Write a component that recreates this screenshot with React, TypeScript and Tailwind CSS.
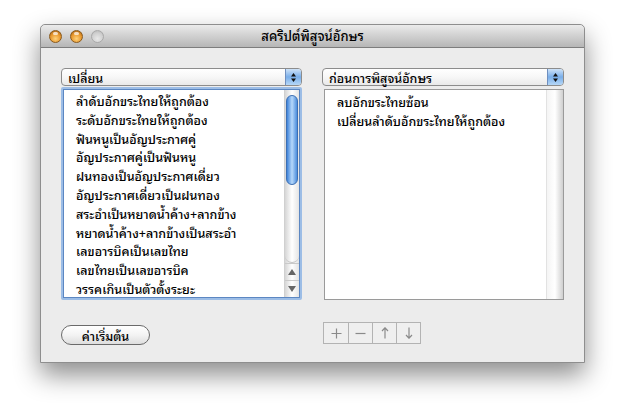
import React from 'react';

const leftItems = [
  'ลำดับอักขระไทยให้ถูกต้อง',
  'ระดับอักขระไทยให้ถูกต้อง',
  'ฟันหนูเป็นอัญประกาศคู่',
  'อัญประกาศคู่เป็นฟันหนู',
  'ฝนทองเป็นอัญประกาศเดี่ยว',
  'อัญประกาศเดี่ยวเป็นฝนทอง',
  'สระอำเป็นหยาดน้ำค้าง+ลากข้าง',
  'หยาดน้ำค้าง+ลากข้างเป็นสระอำ',
  'เลขอารบิคเป็นเลขไทย',
  'เลขไทยเป็นเลขอารบิค',
  'วรรคเกินเป็นตัวตั้งระยะ',
];

const rightItems = ['ลบอักขระไทยซ้อน', 'เปลี่ยนลำดับอักขระไทยให้ถูกต้อง'];

// small up/down arrows used on the popup buttons
const PopupArrows = () => (
  <svg width="7" height="11" viewBox="0 0 7 11">
    <path d="M3.5 1 L6 4.5 L1 4.5 Z" fill="#111" />
    <path d="M3.5 10 L6 6.5 L1 6.5 Z" fill="#111" />
  </svg>
);

const Popup = ({ label }: { label: string }) => (
  <div className="flex h-[18px] rounded-[4px] border border-[#8c8c8c] bg-gradient-to-b from-white via-[#f7f7f7] to-[#e9e9e9]">
    <div className="flex-1 pl-[6px] text-[12.5px] leading-[17px] font-medium text-black whitespace-nowrap">{label}</div>
    <div className="w-[16px] flex items-center justify-center rounded-r-[3px] border-l border-[#6f8fbf] bg-gradient-to-b from-[#cfe3f8] via-[#79aee9] to-[#b5d7f7]">
      <PopupArrows />
    </div>
  </div>
);

const Light = ({ on }: { on: boolean }) =>
  on ? (
    <div className="w-[13px] h-[13px] rounded-full border border-[#8a5a1c] bg-[radial-gradient(circle_at_50%_70%,#ffd27a_0%,#e7962c_55%,#9c5a14_100%)] relative">
      <div className="absolute left-[3px] top-[1px] w-[5px] h-[3px] rounded-full bg-white/70" />
    </div>
  ) : (
    <div className="w-[13px] h-[13px] rounded-full border border-[#a9a9a9] bg-[radial-gradient(circle_at_50%_70%,#e8e8e8_0%,#cfcfcf_60%,#b3b3b3_100%)]" />
  );

export default function App() {
  return (
    <div
      className="w-[623px] h-[409px] bg-white pt-[24px] pl-[40px]"
      style={{ fontFamily: '"Noto Sans Thai Looped", "Noto Sans Thai", "Noto Sans", sans-serif' }}
    >
      <div className="w-[545px] h-[339px] flex flex-col rounded-t-[5px] border border-[#8e8e8e] shadow-[0_12px_26px_rgba(0,0,0,0.45)] bg-[#ececec]">
        {/* title bar */}
        <div className="h-[23px] relative flex items-center rounded-t-[5px] border-b border-[#7d7d7d] bg-gradient-to-b from-[#ebebeb] to-[#b6b6b6]">
          <div className="flex gap-[8px] pl-[8px]">
            <Light on />
            <Light on />
            <Light on={false} />
          </div>
          <div className="absolute inset-0 flex items-center justify-center text-[13px] font-medium text-black">
            สคริปต์พิสูจน์อักษร
          </div>
        </div>

        {/* body */}
        <div className="flex-1 flex flex-col px-[20px] pt-[20px]">
          <div className="flex gap-[20px]">
            {/* left column */}
            <div className="w-[242px] flex flex-col gap-[1px]">
              <Popup label="เปลี่ยน" />
              <div className="h-[213px] p-[2px] rounded-[2px] bg-[#9cbde6]">
                <div className="h-full flex border border-[#5c87c2] bg-white">
                  <div className="flex-1 pt-[1px] pl-[12px]">
                    {leftItems.map((t) => (
                      <div key={t} className="h-[18.8px] leading-[18.8px] text-[12.5px] font-medium text-black whitespace-nowrap">
                        {t}
                      </div>
                    ))}
                  </div>
                  {/* aqua scroller */}
                  <div className="w-[15px] flex flex-col bg-gradient-to-r from-[#d6d6d6] via-white to-[#e4e4e4] border-l border-[#d0d0d0]">
                    <div className="h-[5px]" />
                    <div className="mx-[1px] h-[90px] rounded-full border border-[#3c6fb3] bg-gradient-to-r from-[#3d82d8] via-[#b6d8fa] to-[#4b8ddc]" />
                    <div className="flex-1 rounded-b-full border-b border-[#c4c4c4]" />
                    <div className="h-[17px] flex items-center justify-center border-t border-[#c9c9c9]">
                      <svg width="8" height="6" viewBox="0 0 8 6"><path d="M4 0 L8 6 L0 6 Z" fill="#666" /></svg>
                    </div>
                    <div className="h-[17px] flex items-center justify-center border-t border-[#c9c9c9]">
                      <svg width="8" height="6" viewBox="0 0 8 6"><path d="M0 0 L8 0 L4 6 Z" fill="#666" /></svg>
                    </div>
                  </div>
                </div>
              </div>
            </div>

            {/* right column */}
            <div className="w-[243px] flex flex-col gap-[3px]">
              <Popup label="ก่อนการพิสูจน์อักษร" />
              <div className="ml-[2px] h-[211px] flex border border-[#9a9a9a] bg-white">
                <div className="flex-1 pt-[2px] pl-[12px]">
                  {rightItems.map((t) => (
                    <div key={t} className="h-[18.8px] leading-[18.8px] text-[12.5px] font-medium text-black whitespace-nowrap">
                      {t}
                    </div>
                  ))}
                </div>
                <div className="w-[17px] bg-gradient-to-r from-[#f4f4f4] via-white to-[#cfcfcf] border-l border-[#e2e2e2]" />
              </div>
            </div>
          </div>

          {/* bottom controls */}
          <div className="flex gap-[20px] mt-[22px]">
            <div className="w-[242px]">
              <button className="w-[89px] h-[20px] rounded-full border border-[#6a6a6a] bg-gradient-to-b from-white via-[#f3f3f3] to-[#dedede] text-[12.5px] font-medium leading-[18px] text-black">
                ค่าเริ่มต้น
              </button>
            </div>
            <div className="flex h-[22px] border border-[#b3b3b3] bg-[#efefef]">
              <div className="w-[24px] flex items-center justify-center">
                <svg width="11" height="11" viewBox="0 0 11 11"><path d="M5.5 0.5 V10.5 M0.5 5.5 H10.5" stroke="#8a8a8a" strokeWidth="1.2" /></svg>
              </div>
              <div className="w-[24px] flex items-center justify-center border-l border-[#b3b3b3]">
                <svg width="11" height="11" viewBox="0 0 11 11"><path d="M0.5 5.5 H10.5" stroke="#8a8a8a" strokeWidth="1.2" /></svg>
              </div>
              <div className="w-[24px] flex items-center justify-center border-l border-[#b3b3b3]">
                <svg width="8" height="12" viewBox="0 0 8 12"><path d="M4 1 V11.5 M1 4 L4 0.8 L7 4" stroke="#8a8a8a" strokeWidth="1.2" fill="none" /></svg>
              </div>
              <div className="w-[24px] flex items-center justify-center border-l border-[#b3b3b3]">
                <svg width="8" height="12" viewBox="0 0 8 12"><path d="M4 0.5 V11 M1 8 L4 11.2 L7 8" stroke="#8a8a8a" strokeWidth="1.2" fill="none" /></svg>
              </div>
            </div>
          </div>
        </div>
      </div>
    </div>
  );
}
